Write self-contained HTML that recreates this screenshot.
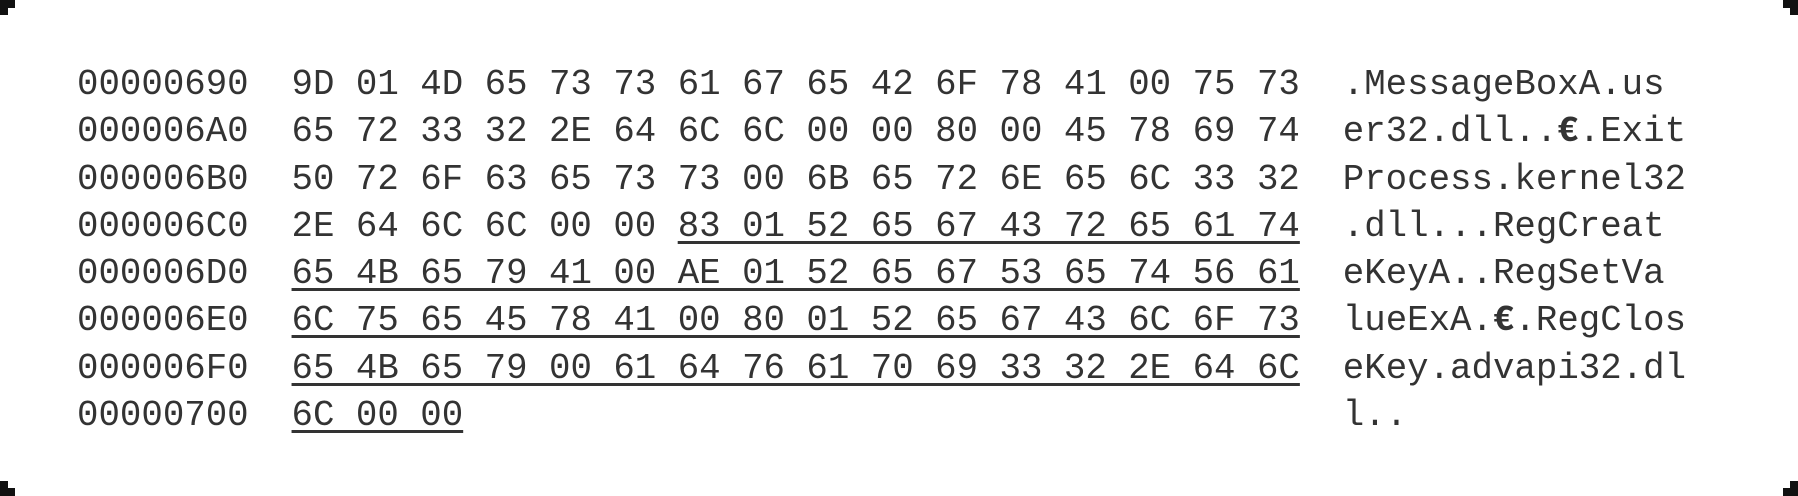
<!DOCTYPE html>
<html><head><style>
html,body{margin:0;padding:0;background:#fff;width:1798px;height:496px;overflow:hidden;position:relative}
pre{position:absolute;left:77px;top:61px;margin:0;font-family:"Liberation Mono","Courier New",monospace;font-size:35.75px;line-height:47.3px;color:#333;letter-spacing:0}
u{text-decoration:underline;text-decoration-thickness:3px;text-underline-offset:5px}
b{font-weight:bold}
.c{position:absolute;background:#111}
</style></head><body>
<div class="c" style="left:0;top:0;width:15px;height:8px"></div>
<div class="c" style="left:0;top:0;width:8px;height:15px"></div>
<div class="c" style="left:0;bottom:0;width:15px;height:8px"></div>
<div class="c" style="left:0;bottom:0;width:8px;height:15px"></div>
<div class="c" style="right:0;top:0;width:15px;height:8px"></div>
<div class="c" style="right:0;top:0;width:8px;height:15px"></div>
<div class="c" style="right:0;bottom:0;width:15px;height:8px"></div>
<div class="c" style="right:0;bottom:0;width:8px;height:15px"></div>
<pre>00000690  9D 01 4D 65 73 73 61 67 65 42 6F 78 41 00 75 73  .MessageBoxA.us
000006A0  65 72 33 32 2E 64 6C 6C 00 00 80 00 45 78 69 74  er32.dll..<b>€</b>.Exit
000006B0  50 72 6F 63 65 73 73 00 6B 65 72 6E 65 6C 33 32  Process.kernel32
000006C0  2E 64 6C 6C 00 00 <u>83 01 52 65 67 43 72 65 61 74</u>  .dll...RegCreat
000006D0  <u>65 4B 65 79 41 00 AE 01 52 65 67 53 65 74 56 61</u>  eKeyA..RegSetVa
000006E0  <u>6C 75 65 45 78 41 00 80 01 52 65 67 43 6C 6F 73</u>  lueExA.<b>€</b>.RegClos
000006F0  <u>65 4B 65 79 00 61 64 76 61 70 69 33 32 2E 64 6C</u>  eKey.advapi32.dl
00000700  <u>6C 00 00</u>                                         l..</pre>
</body></html>
